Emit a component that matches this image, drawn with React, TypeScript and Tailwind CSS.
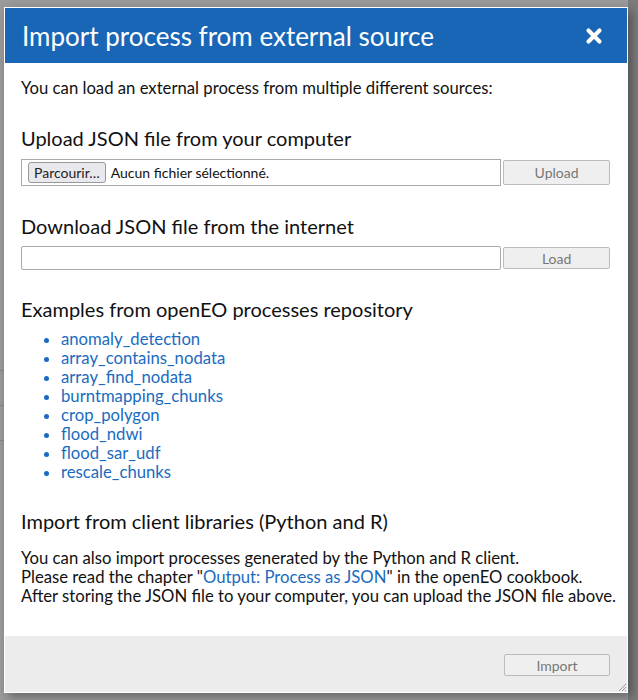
import { X } from "lucide-react";

const examples = [
  "anomaly_detection",
  "array_contains_nodata",
  "array_find_nodata",
  "burntmapping_chunks",
  "crop_polygon",
  "flood_ndwi",
  "flood_sar_udf",
  "rescale_chunks",
];

const font = { fontFamily: "Lato, 'Open Sans', sans-serif" };

export default function App() {
  return (
    <div className="relative w-[638px] h-[700px] bg-[#9a9a9a] overflow-hidden" style={font}>
      {/* dimmed app behind the dialog */}
      <div className="absolute right-0 top-0 w-[10px] h-full bg-[#7c7c7c]" />
      <div className="absolute left-0 top-[370px] w-[5px] h-px bg-[#888]" />
      <div className="absolute left-0 top-[405px] w-[5px] h-px bg-[#888]" />
      <div className="absolute left-0 top-[440px] w-[5px] h-px bg-[#888]" />

      <div className="absolute left-[4px] top-[7px] w-[624px] h-[686px] bg-white border border-white flex flex-col shadow-[4px_4px_10px_rgba(0,0,0,0.35)]">
        {/* Header */}
        <div className="h-[55px] bg-[#1966b6] flex items-center justify-between pl-[17px] pr-[22px] shrink-0">
          <h1 className="text-white text-[26px] leading-none">Import process from external source</h1>
          <X className="text-white w-[22px] h-[22px]" strokeWidth={4.5} />
        </div>

        {/* Body */}
        <div className="flex-1 pl-[16px] pr-[17px] text-[#111] text-[16.7px] leading-[19px]">
          <p className="mt-[16px]">You can load an external process from multiple different sources:</p>

          <h2 className="mt-[28px] text-[20px] leading-[24px]">Upload JSON file from your computer</h2>
          <div className="mt-[9px] flex gap-[2px] items-center">
            <div className="w-[481px] h-[27px] border border-[#aaa] flex items-center pl-[6px] text-[14px]">
              <span className="h-[21px] px-[5px] border border-[#999] rounded-[3px] bg-[#e9e9ed] flex items-center text-[#222]">Parcourir…</span>
              <span className="ml-[5px] text-[#111]">Aucun fichier sélectionné.</span>
            </div>
            <button className="w-[107px] h-[25px] border border-[#bbb] bg-[#efefef] text-[#777] text-[14px] rounded-[2px]">Upload</button>
          </div>

          <h2 className="mt-[28px] text-[20px] leading-[24px]">Download JSON file from the internet</h2>
          <div className="mt-[8px] flex gap-[2px] items-center">
            <div className="w-[481px] h-[24px] border border-[#aaa] rounded-[2px]" />
            <button className="w-[107px] h-[22px] border border-[#bbb] bg-[#efefef] text-[#777] text-[14px] rounded-[2px]">Load</button>
          </div>

          <h2 className="mt-[27px] text-[20px] leading-[24px]">Examples from openEO processes repository</h2>
          <ul className="mt-[9px] pl-[40px] list-disc">
            {examples.map((e) => (
              <li key={e} className="text-[#1a6bc0]">
                <a className="text-[#1a6bc0] cursor-pointer">{e}</a>
              </li>
            ))}
          </ul>

          <h2 className="mt-[27px] text-[20px] leading-[24px]">Import from client libraries (Python and R)</h2>
          <p className="mt-[16px] whitespace-nowrap">
            You can also import processes generated by the Python and R client.
            <br />
            Please read the chapter "<a className="text-[#1a6bc0]">Output: Process as JSON</a>" in the openEO cookbook.
            <br />
            After storing the JSON file to your computer, you can upload the JSON file above.
          </p>
        </div>

        {/* Footer */}
        <div className="h-[56px] bg-[#ececec] shrink-0 flex items-center justify-end pr-[17px] relative">
          <button className="w-[106px] h-[22px] mt-[2px] border border-[#bbb] bg-[#efefef] text-[#777] text-[14px] rounded-[2px]">Import</button>
          <svg className="absolute right-0 bottom-0" width="10" height="10" viewBox="0 0 10 10">
            <path d="M9 2 L2 9 M9 5 L5 9 M9 8 L8 9" stroke="#999" strokeWidth="1" />
          </svg>
        </div>
      </div>
    </div>
  );
}
